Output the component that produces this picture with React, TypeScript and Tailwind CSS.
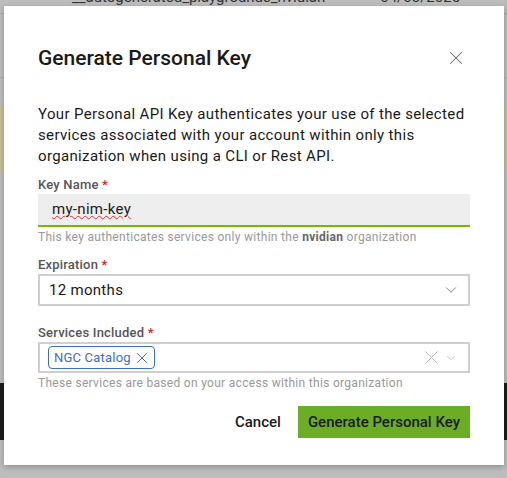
import { X, ChevronDown } from "lucide-react";

const font = { fontFamily: "Roboto, 'Liberation Sans', sans-serif" };

function Label({ children }: { children: React.ReactNode }) {
  return (
    <div className="text-[13px] leading-[18px] font-medium text-[#555] tracking-[0.2px]">
      {children} <span className="text-[#e02020]">*</span>
    </div>
  );
}

export default function App() {
  return (
    <div style={font} className="relative w-[507px] h-[478px] overflow-hidden bg-[#bdbdbd]">
      {/* dimmed page behind the dialog */}
      <div className="flex flex-col">
        <div className="h-[28px] border-b border-[#a9a9a9] flex gap-[55px] pl-[72px] -mt-[14px] text-[15px] text-[#333]">
          <span>__autogenerated_playgrounds_nvidian</span>
          <span>04/03/2025</span>
        </div>
        <div className="h-[64px] border-b border-[#adadad]" />
        <div className="h-[27px]" />
        <div className="h-[67px] bg-[#c5c197]" />
        <div className="h-[211px]" />
        <div className="h-[57px] bg-[#1c1c1c]" />
      </div>

      <div className="absolute left-[4px] top-[6px] w-[500px] h-[459px] bg-white shadow-[0_2px_6px_rgba(0,0,0,0.25)] px-[34px] pt-[38px]">
        <div className="flex items-center justify-between">
          <h2 className="text-[21px] leading-[28px] font-medium text-[#1a1a1a]">Generate Personal Key</h2>
          <X className="w-[22px] h-[22px] text-[#666] mr-[3px]" strokeWidth={1.1} />
        </div>

        <p className="mt-[32px] text-[15px] leading-[21px] text-[#1a1a1a] tracking-[0.35px]">
          Your Personal API Key authenticates your use of the selected services associated with your account within only this
          organization when using a CLI or Rest API.
        </p>

        <div className="mt-[9px]">
          <Label>Key Name</Label>
          <div className="h-[33px] bg-[#eeeeee] border-b-2 border-[#76b900] flex items-center pl-[14px] text-[15px] text-[#1a1a1a] tracking-[0.3px]">
            <span className="underline decoration-wavy decoration-[#e03030] decoration-1">my-nim-key</span>
          </div>
          <div className="text-[12px] leading-[16px] mt-[2px] text-[#999] tracking-[0.3px]">
            This key authenticates services only within the <span className="font-bold text-[#666]">nvidian</span> organization
          </div>
        </div>

        <div className="mt-[11px]">
          <Label>Expiration</Label>
          <div className="h-[32px] border-2 border-[#cfcfcf] flex items-center justify-between pl-[9px] pr-[8px] text-[15px] text-[#1a1a1a] tracking-[0.3px]">
            <span>12 months</span>
            <ChevronDown className="w-[18px] h-[18px] text-[#777]" strokeWidth={1.2} />
          </div>
        </div>

        <div className="mt-[18px]">
          <Label>Services Included</Label>
          <div className="h-[31px] border-2 border-[#cfcfcf] flex items-center justify-between pl-[8px] pr-[10px]">
            <span className="flex items-center gap-[2px] h-[23px] pl-[5px] pr-[3px] border border-[#3f6ec6] rounded-[4px] text-[13px] text-[#3f6ec6] tracking-[0.2px]">
              NGC Catalog
              <X className="w-[18px] h-[18px]" strokeWidth={1.3} />
            </span>
            <span className="flex items-center gap-[1px] text-[#bbb]">
              <X className="w-[23px] h-[23px]" strokeWidth={1} />
              <ChevronDown className="w-[14px] h-[14px]" strokeWidth={1.4} />
            </span>
          </div>
          <div className="text-[12px] leading-[16px] mt-[2px] text-[#999] tracking-[0.3px]">
            These services are based on your access within this organization
          </div>
        </div>

        <div className="mt-[15px] flex items-center justify-end gap-[17px]">
          <button className="text-[15px] text-[#1a1a1a] font-medium">Cancel</button>
          <button className="h-[32px] px-[10px] bg-[#6bae25] text-[15px] font-medium text-[#1a1a1a]">Generate Personal Key</button>
        </div>
      </div>
    </div>
  );
}
